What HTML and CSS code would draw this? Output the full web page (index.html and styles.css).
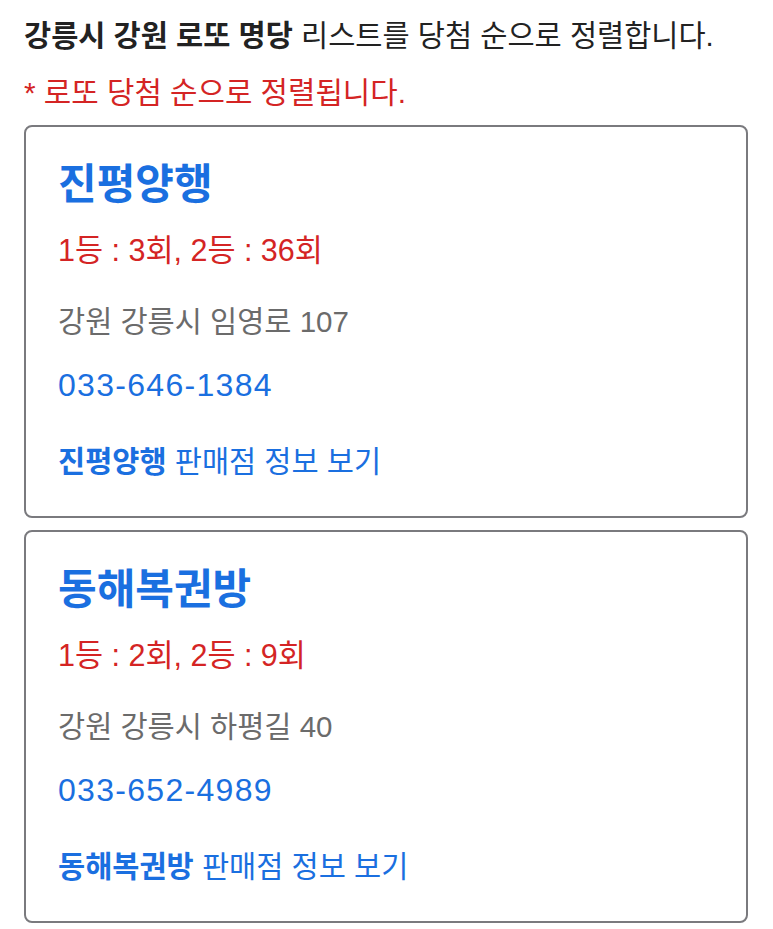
FILE: index.html
```html
<!DOCTYPE html>
<html lang="ko">
<head>
<meta charset="utf-8">
<link rel="stylesheet" href="styles.css">
</head>
<body>
<div class="page">
  <h1 class="intro"><strong>강릉시 강원 로또 명당</strong> 리스트를 당첨 순으로 정렬합니다.</h1>
  <p class="note">* 로또 당첨 순으로 정렬됩니다.</p>
  <div class="card">
    <h2 class="name">진평양행</h2>
    <p class="wins">1등 : 3회, 2등 : 36회</p>
    <p class="addr">강원 강릉시 임영로 107</p>
    <p class="phone">033-646-1384</p>
    <p class="link"><strong>진평양행</strong> 판매점 정보 보기</p>
  </div>
  <div class="card">
    <h2 class="name">동해복권방</h2>
    <p class="wins">1등 : 2회, 2등 : 9회</p>
    <p class="addr">강원 강릉시 하평길 40</p>
    <p class="phone">033-652-4989</p>
    <p class="link"><strong>동해복권방</strong> 판매점 정보 보기</p>
  </div>
</div>
</body>
</html>
```
FILE: styles.css
```css
html, body {
  margin: 0;
  padding: 0;
  background: #ffffff;
}
body {
  font-family: "Liberation Sans", "Noto Sans CJK KR", sans-serif;
}
.page {
  padding: 16px 25px 0 24px;
  display: flex;
  flex-direction: column;
}
.intro {
  margin: 0;
  font-size: 29.5px;
  line-height: 40px;
  font-weight: 400;
  color: #222222;
  white-space: nowrap;
}
.intro strong {
  font-weight: 700;
}
.note {
  margin: 17px 0 0 0;
  font-size: 29.8px;
  line-height: 40px;
  color: #d42424;
}
.card {
  margin-top: 12px;
  border: 2px solid #7a7a7e;
  border-radius: 8px;
  padding: 32px 32px 34px 32px;
  display: flex;
  flex-direction: column;
}
.card p, .card h2 {
  margin: 0;
}
.name {
  font-size: 42px;
  line-height: 52px;
  font-weight: 700;
  color: #1a6fe0;
}
.wins {
  margin-top: 19px !important;
  font-size: 30.5px;
  line-height: 40px;
  color: #d42424;
}
.addr {
  margin-top: 32px !important;
  font-size: 29.5px;
  line-height: 40px;
  color: #6b6b6b;
}
.phone {
  margin-top: 23px !important;
  font-size: 32px;
  line-height: 40px;
  letter-spacing: 1.3px;
  color: #1a6fe0;
}
.link {
  margin-top: 37px !important;
  font-size: 29.5px;
  line-height: 40px;
  color: #1a6fe0;
}
.link strong {
  font-weight: 700;
}
```
